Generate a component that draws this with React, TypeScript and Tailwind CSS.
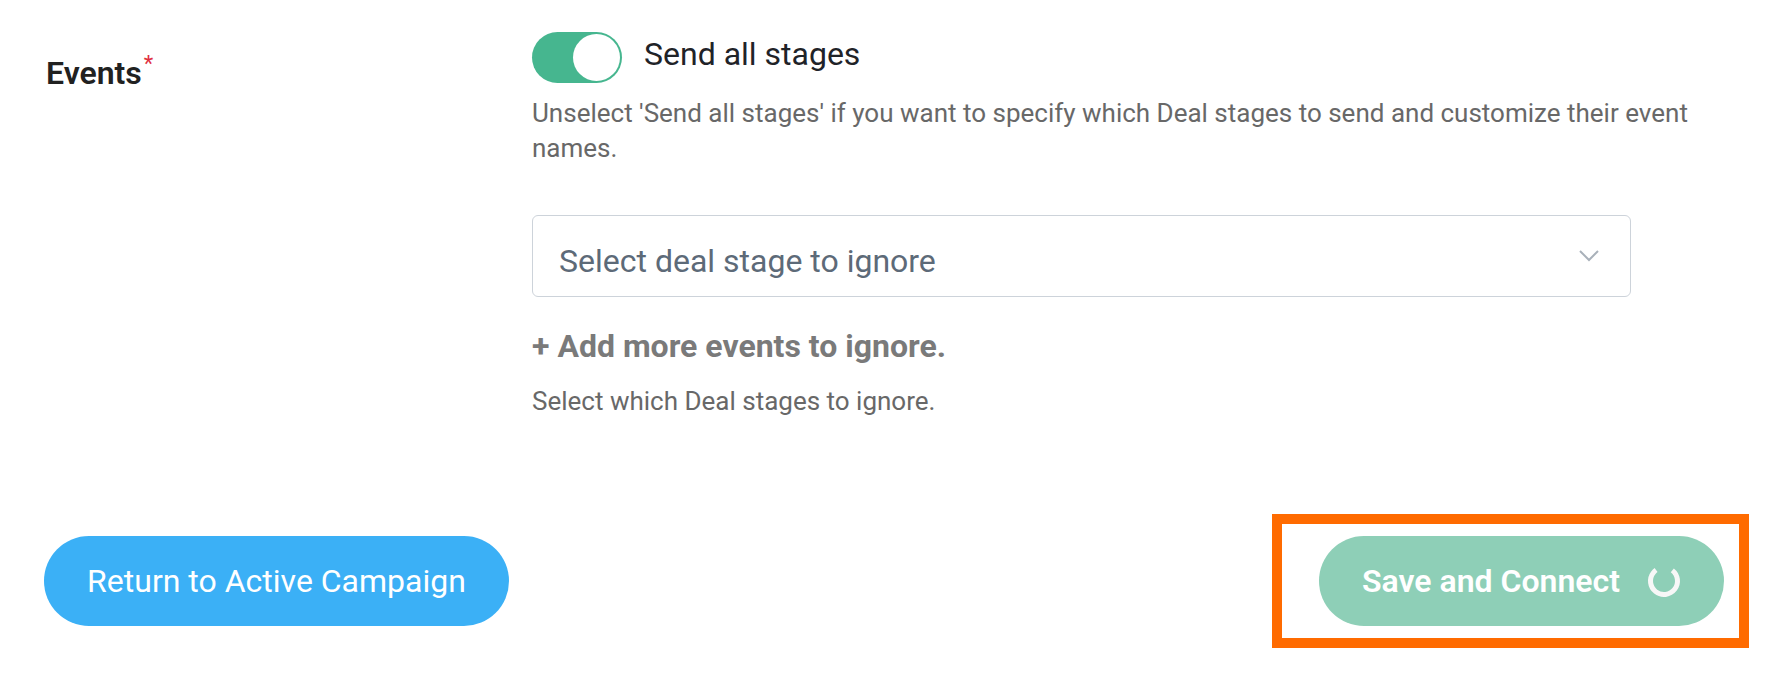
import React from 'react'

function Toggle({ on }: { on: boolean }) {
  return (
    <div
      className={`w-[90px] h-[51px] rounded-full p-[2px] flex ${on ? 'bg-[#46b68f] justify-end' : 'bg-[#cfd5db] justify-start'}`}
    >
      <div className="w-[47px] h-[47px] rounded-full bg-white" />
    </div>
  )
}

function Spinner() {
  return (
    <svg width="34" height="34" viewBox="0 0 34 34">
      <circle
        cx="17"
        cy="17"
        r="13.5"
        fill="none"
        stroke="#f7f7f7"
        strokeWidth="5"
        strokeDasharray="67 18"
        transform="rotate(-52 17 17)"
      />
    </svg>
  )
}

function App() {
  return (
    <div className="min-h-screen bg-white font-[Roboto,sans-serif] pl-[44px] pr-[27px] pt-[32px]">
      <div className="flex">
        <div className="w-[488px] shrink-0 pt-[23px]">
          <span className="text-[32px] leading-[36px] font-semibold text-[#212121] pl-[2px]">
            Events
          </span>
          <span className="text-[22px] leading-[22px] text-[#e0303f] align-top ml-[2px] relative -top-[2px]">*</span>
        </div>

        <div className="w-[1210px]">
          <div className="flex items-start gap-[22px]">
            <Toggle on={true} />
            <span className="mt-[4px] text-[32px] leading-[36px] text-[#1f2328]">Send all stages</span>
          </div>

          <p className="mt-[13px] text-[26px] leading-[35px] text-[#686868]">
            Unselect 'Send all stages' if you want to specify which Deal stages to send and customize their event names.
          </p>

          <div className="mt-[49px] w-[1099px] h-[82px] border border-[#cdd3da] rounded-[6px] pl-[26px] pr-[31px] flex items-center justify-between">
            <span className="pt-[10px] text-[32px] leading-[38px] text-[#5d6a78]">Select deal stage to ignore</span>
            <svg width="20" height="12" viewBox="0 0 20 12">
              <polyline points="1,1 10,10 19,1" fill="none" stroke="#a9b1ba" strokeWidth="2" />
            </svg>
          </div>

          <button className="mt-[31px] block text-[32px] leading-[36px] font-bold text-[#7a7a7a]">
            + Add more events to ignore.
          </button>

          <p className="mt-[22px] text-[26px] leading-[30px] text-[#686868]">Select which Deal stages to ignore.</p>
        </div>
      </div>

      <div className="mt-[98px] flex items-center justify-between">
        <button className="w-[465px] h-[90px] rounded-full bg-[#3bb0f6] flex items-center justify-center text-[32px] text-white">
          Return to Active Campaign
        </button>

        <div className="border-[10px] border-[#ff6b00] pl-[37px] pr-[15px] py-[12px]">
          <button className="w-[405px] h-[90px] rounded-full bg-[#8ecfb7] flex items-center justify-center gap-[27px]">
            <span className="text-[32px] font-semibold text-white">Save and Connect</span>
            <Spinner />
          </button>
        </div>
      </div>
    </div>
  )
}

export default App
